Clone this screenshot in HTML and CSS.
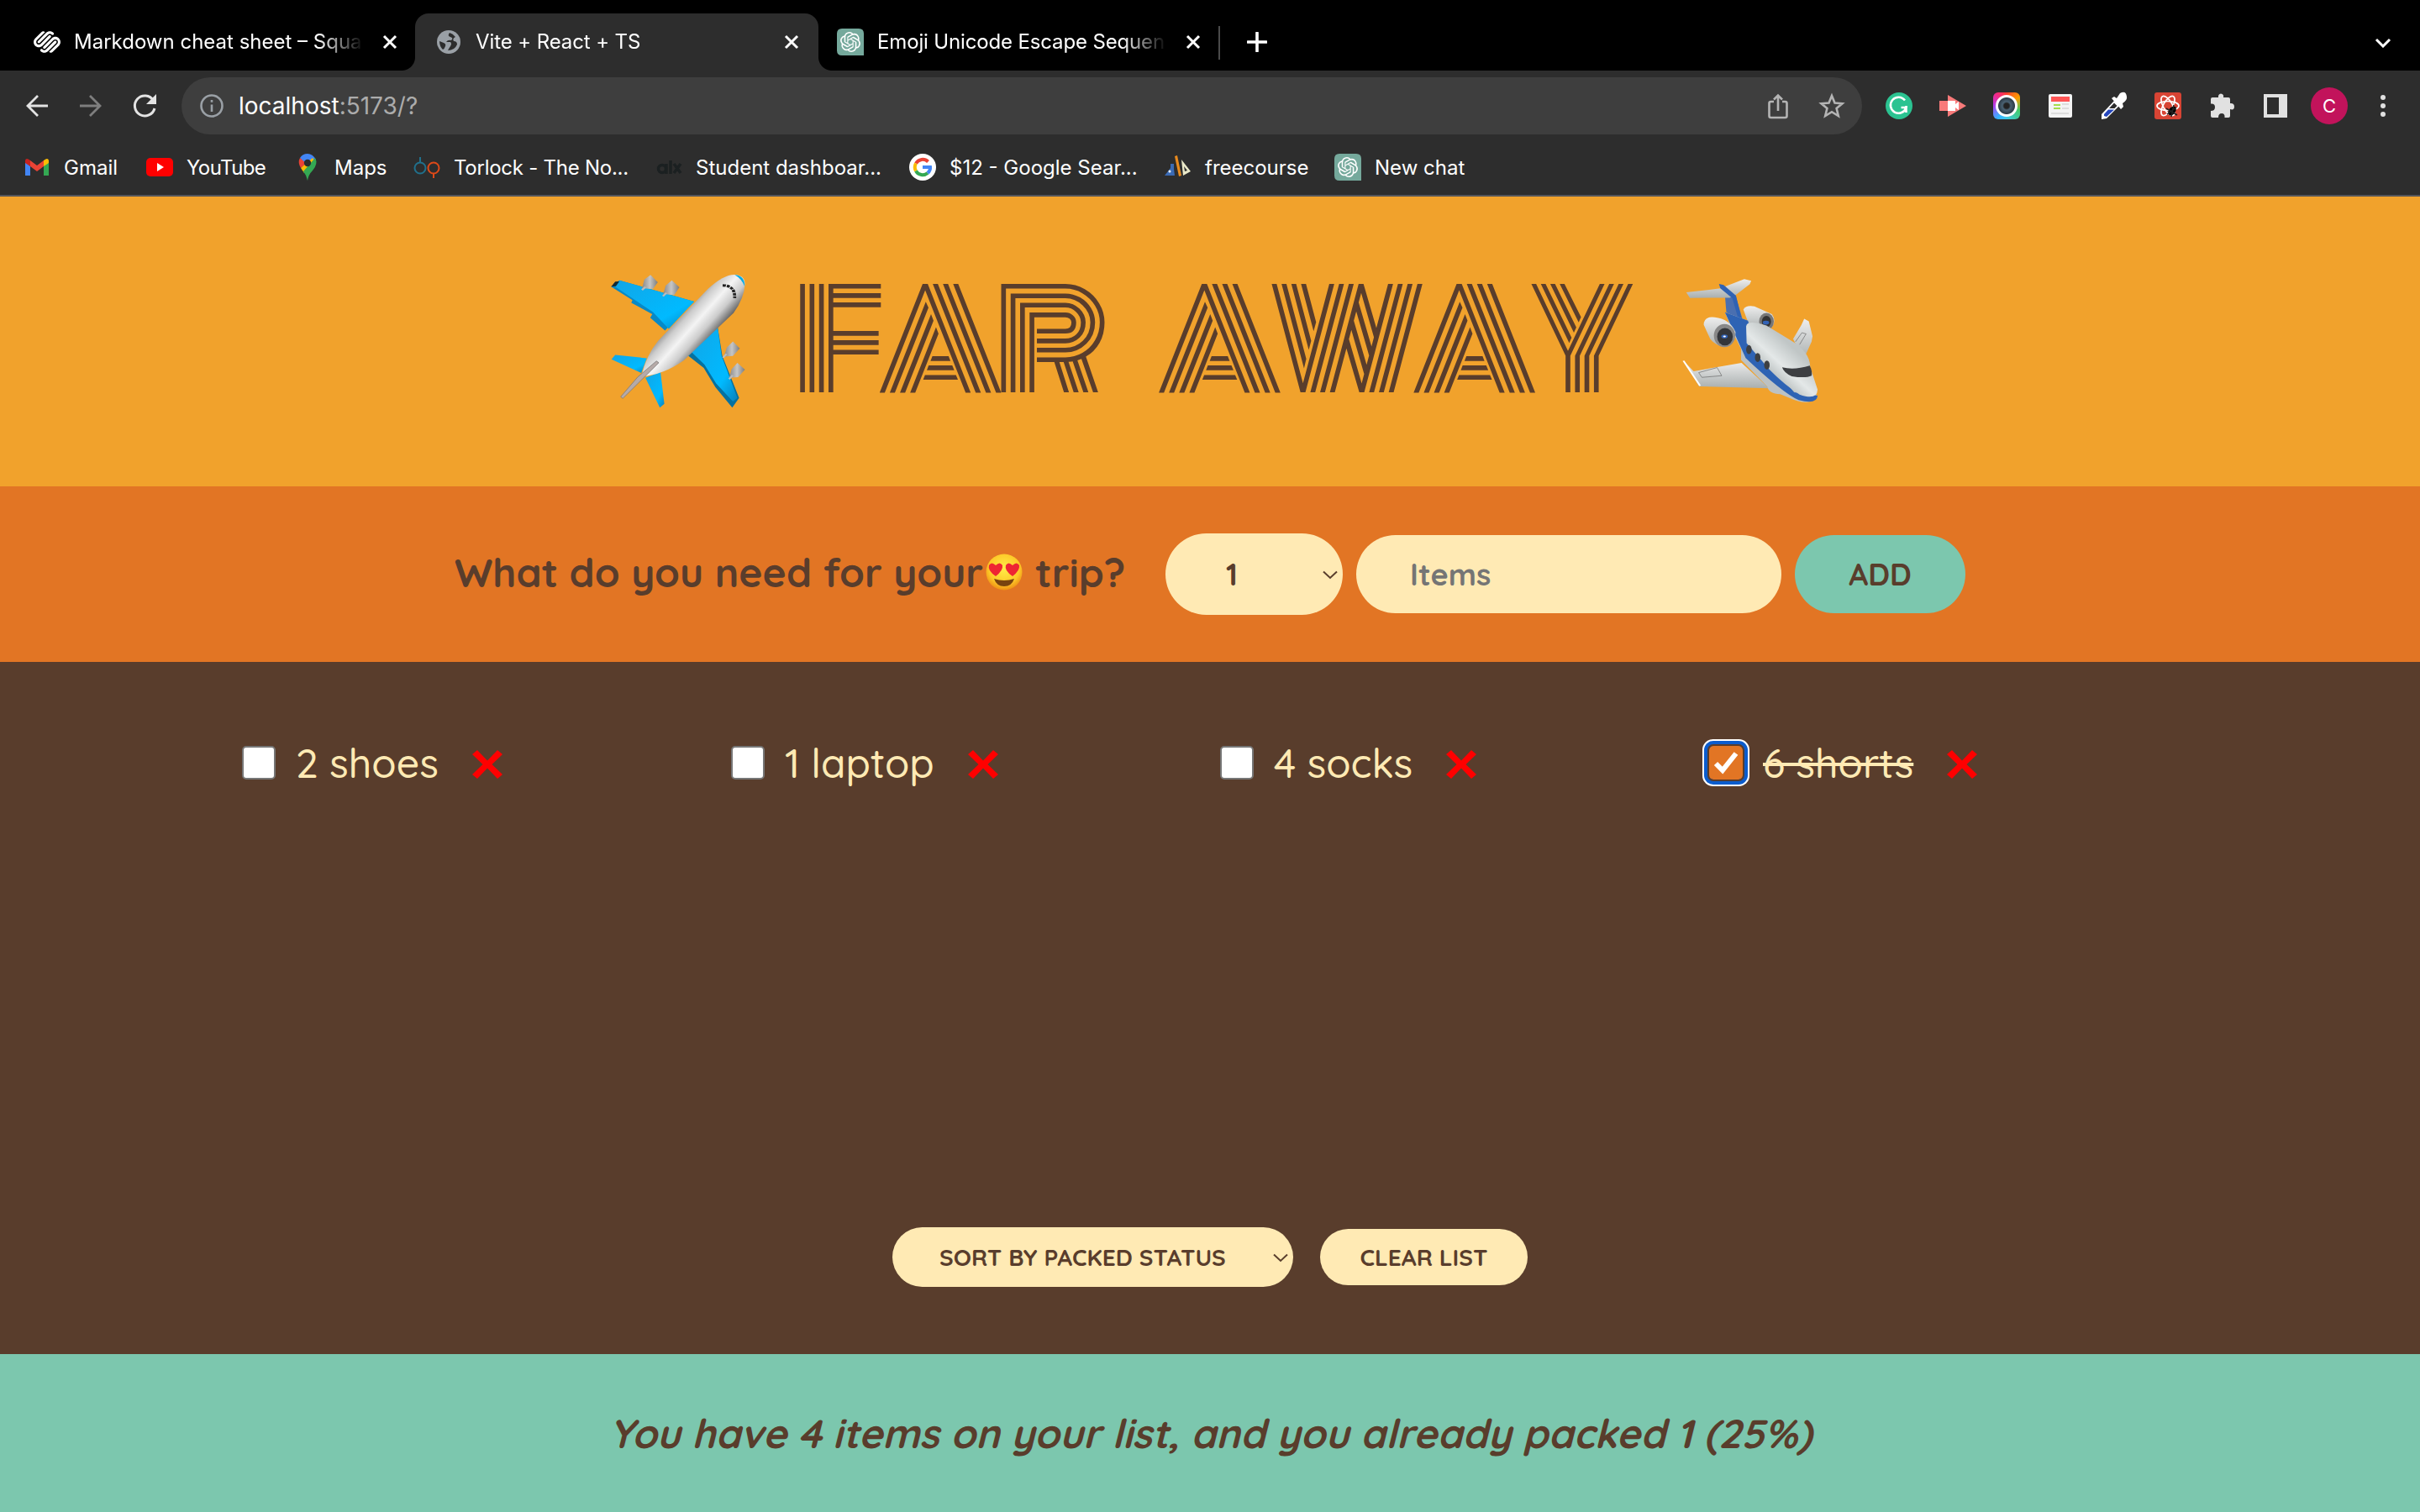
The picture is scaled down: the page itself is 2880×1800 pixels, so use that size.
FILE: index.html
```html
<!DOCTYPE html>
<html lang="en">
<head>
<meta charset="utf-8">
<title>Vite + React + TS</title>
<link rel="stylesheet" href="styles.css">
</head>
<body>
<svg width="0" height="0" class="sprite" aria-hidden="true">
  <symbol id="close" viewBox="0 0 20 20"><path d="M3 3L17 17M17 3L3 17" stroke="#fff" stroke-width="3"/></symbol>
  <symbol id="chat" viewBox="0 0 32 32">
    <path d="M6 0H26Q32 0 32 6V32H6Q0 32 0 26V6Q0 0 6 0Z" fill="#75a99c"/>
    <path transform="translate(4 4)" fill="#fff" d="M22.2819 9.8211a5.9847 5.9847 0 0 0-.5157-4.9108 6.0462 6.0462 0 0 0-6.5098-2.9A6.0651 6.0651 0 0 0 4.9807 4.1818a5.9847 5.9847 0 0 0-3.9977 2.9 6.0462 6.0462 0 0 0 .7427 7.0966 5.98 5.98 0 0 0 .511 4.9107 6.051 6.051 0 0 0 6.5146 2.9001A5.9847 5.9847 0 0 0 13.2599 24a6.0557 6.0557 0 0 0 5.7718-4.2058 5.9894 5.9894 0 0 0 3.9977-2.9001 6.0557 6.0557 0 0 0-.7475-7.0729zm-9.022 12.6081a4.4755 4.4755 0 0 1-2.8764-1.0408l.1419-.0804 4.7783-2.7582a.7948.7948 0 0 0 .3927-.6813v-6.7369l2.02 1.1686a.071.071 0 0 1 .038.052v5.5826a4.504 4.504 0 0 1-4.4945 4.4944zm-9.6607-4.1254a4.4708 4.4708 0 0 1-.5346-3.0137l.142.0852 4.783 2.7582a.7712.7712 0 0 0 .7806 0l5.8428-3.3685v2.3324a.0804.0804 0 0 1-.0332.0615L9.74 19.9502a4.4992 4.4992 0 0 1-6.1408-1.6464zM2.3408 7.8956a4.485 4.485 0 0 1 2.3655-1.9728V11.6a.7664.7664 0 0 0 .3879.6765l5.8144 3.3543-2.0201 1.1685a.0757.0757 0 0 1-.071 0l-4.8303-2.7865A4.504 4.504 0 0 1 2.3408 7.872zm16.5963 3.8558L13.1038 8.364 15.1192 7.2a.0757.0757 0 0 1 .071 0l4.8303 2.7913a4.4944 4.4944 0 0 1-.6765 8.1042v-5.6772a.79.79 0 0 0-.407-.667zm2.0107-3.0231l-.142-.0852-4.7735-2.7818a.7759.7759 0 0 0-.7854 0L9.409 9.2297V6.8974a.0662.0662 0 0 1 .0284-.0615l4.8303-2.7866a4.4992 4.4992 0 0 1 6.6802 4.66zM8.3065 12.863l-2.02-1.1638a.0804.0804 0 0 1-.038-.0567V6.0742a4.4992 4.4992 0 0 1 7.3757-3.4537l-.142.0805L8.704 5.459a.7948.7948 0 0 0-.3927.6813zm1.0976-2.3654l2.602-1.4998 2.6069 1.4998v2.9994l-2.5974 1.4997-2.6067-1.4997Z"/>
  </symbol>
  <symbol id="cross" viewBox="0 0 36 34"><path d="M6 0L18 12.500L30 0L36 5L23.500 17L36 29L30 34L18 21.500L6 34L0 29L12.500 17L0 5Z" fill="#f00"/></symbol>
  <symbol id="caret" viewBox="0 0 18 11"><path d="M1 1.500L9 9L17 1.500" fill="none" stroke="#593d2c" stroke-width="2"/></symbol>
</svg>

<div class="tabs">
  <div class="tab">
    <svg class="ico" viewBox="0 0 24 24" fill="#fff"><path d="M22.655 8.719c-1.802-1.801-4.726-1.801-6.564 0l-7.351 7.35c-.45.45-.45 1.2 0 1.65.45.449 1.2.449 1.65 0l7.351-7.351c.899-.899 2.362-.899 3.264 0 .9.9.9 2.364 0 3.264l-7.239 7.239c.9.899 2.362.899 3.263 0l5.589-5.589c1.836-1.838 1.836-4.763.037-6.563zm-2.475 2.437c-.451-.45-1.201-.45-1.65 0l-7.354 7.389c-.9.899-2.361.899-3.262 0-.45-.45-1.2-.45-1.65 0s-.45 1.2 0 1.649c1.801 1.801 4.726 1.801 6.564 0l7.351-7.35c.449-.487.449-1.239.001-1.688zm-2.439-7.35c-1.801-1.801-4.726-1.801-6.564 0l-7.351 7.351c-.45.449-.45 1.199 0 1.649s1.2.45 1.65 0l7.395-7.351c.9-.899 2.371-.899 3.27 0 .451.45 1.201.45 1.65 0 .421-.487.421-1.199-.05-1.649zm-2.475 2.475c-.45-.449-1.2-.449-1.65 0l-7.351 7.351c-.899.9-2.362.9-3.265 0-.9-.9-.9-2.364 0-3.264l7.239-7.239c-.9-.9-2.362-.9-3.263 0L1.35 8.719c-1.8 1.8-1.8 4.762 0 6.563 1.801 1.801 4.725 1.801 6.564 0l7.35-7.351c.451-.488.451-1.238 0-1.65z"/></svg>
    <span class="label">Markdown cheat sheet – Squa</span>
    <svg class="x"><use href="#close"/></svg>
  </div>
  <div class="tab active">
    <svg class="ico" viewBox="0 0 32 32"><circle cx="16" cy="16" r="14" fill="#9aa0a6"/><path d="M17 5Q14 9 18 10T19 14Q15 13 13 16H18Q20 18 18 21T15 26Q23 26 26 19Q26 15 22 15Q20 12 24 10Q21 6 17 5ZM5 15L10 17Q13 18 12 21T9 25Q5 21 5 15Z" fill="#2d2d2d"/></svg>
    <span class="label">Vite + React + TS</span>
    <svg class="x"><use href="#close"/></svg>
  </div>
  <div class="tab">
    <svg class="ico"><use href="#chat"/></svg>
    <span class="label emoji-tab">Emoji Unicode Escape Sequen</span>
    <svg class="x"><use href="#close"/></svg>
  </div>
  <i class="divider"></i>
  <svg class="plus" viewBox="0 0 24 24"><path d="M12 1V23M1 12H23" stroke="#fff" stroke-width="3.600" stroke-linecap="round"/></svg>
  <svg class="menu-caret" viewBox="0 0 20 12"><path d="M2 2L10 10L18 2" fill="none" stroke="#fff" stroke-width="3"/></svg>
</div>

<div class="toolbar">
  <div class="nav">
    <svg viewBox="0 0 32 32" fill="none" stroke="#e3e3e3" stroke-width="2.800"><path d="M29 16H5M17 4L5 16L17 28"/></svg>
    <svg viewBox="0 0 32 32" fill="none" stroke="#7e7e7e" stroke-width="2.800"><path d="M3 16H27M15 4L27 16L15 28"/></svg>
    <svg viewBox="0 0 32 32" fill="none" stroke="#e3e3e3" stroke-width="3"><path d="M26.500 9.500A12 12 0 1 0 28 19"/><path d="M30 2V14H18Z" fill="#e3e3e3" stroke="none"/></svg>
  </div>
  <div class="omnibox">
    <svg class="info" viewBox="0 0 28 28" fill="none" stroke="#9aa0a6" stroke-width="2.600"><circle cx="14" cy="14" r="12.500"/><path d="M14 12.500V21M14 7V9.800"/></svg>
    <span class="url">localhost<span>:5173/?</span></span>
    <svg viewBox="0 0 64 64" fill="none" stroke="#b4b4b4" stroke-width="2.600"><path d="M27 27H23.500Q21.500 27 21.500 29V44Q21.500 46 23.500 46H40.500Q42.500 46 42.500 44V29Q42.500 27 40.500 27H37M32 38V20M27 24.500L32 19.500L37 24.500"/></svg>
    <svg viewBox="0 0 64 64" fill="none" stroke="#b4b4b4" stroke-width="2.600"><path d="M32 20L35.500 28.500L44.500 29.200L37.600 35L39.800 44L32 39.200L24.200 44L26.400 35L19.500 29.200L28.500 28.500Z"/></svg>
  </div>
  <div class="exts">
    <svg viewBox="0 0 64 64"><circle cx="32" cy="32" r="16" fill="#2bc391"/><path d="M39 25.500A9.500 9.500 0 1 0 40.500 34H34.500M40.500 32V40" fill="none" stroke="#fff" stroke-width="2.600"/></svg>
    <svg viewBox="0 0 64 64"><path d="M16 26H26V19L48 32L26 45V38H16Z" fill="#f87a7a"/><path d="M26 26H35V30L39 27V37L35 34V38H26Z" fill="#fff"/></svg>
    <div class="camera"><i></i></div>
    <svg viewBox="0 0 64 64"><rect x="18" y="18" width="28" height="28" rx="2" fill="#f4f4f4"/><rect x="21" y="21" width="22" height="6" fill="#f55"/><path d="M24 30H32V32H24ZM24 34H32V36H24Z" fill="#a5dc4c"/><path d="M34 30H42M34 35H42M21 41H42" stroke="#ddd" stroke-width="2"/></svg>
    <svg viewBox="0 0 64 64"><path d="M17 48V42L32 26L38 32L23 47Z" fill="#fff"/><path d="M20 44V42L25 36.500H32L23 45Z" fill="#2446bd"/><path d="M26 35L32 28.500L35.500 32L32.500 35Z" fill="#2d2d2d"/><path d="M29 23L32 21L35 23L39 17Q46 13 47 21Q48 25 42 29L43 33L40 36Z" fill="#fff"/></svg>
    <svg viewBox="0 0 64 64"><rect x="16" y="16" width="32" height="32" rx="3" fill="#d84434"/><g fill="none" stroke="#fff" stroke-width="1.700"><ellipse cx="32" cy="32" rx="13" ry="5.500"/><ellipse cx="32" cy="32" rx="13" ry="5.500" transform="rotate(60 32 32)"/><ellipse cx="32" cy="32" rx="13" ry="5.500" transform="rotate(120 32 32)"/></g><ellipse cx="37" cy="38" rx="4" ry="6" transform="rotate(35 37 38)"/><path d="M30 35L43 43M31 42L42 34M36 45L39 31" stroke="#222" stroke-width="1.500"/></svg>
    <svg viewBox="0 0 64 64"><path d="M28 22Q27.500 18 31 17.500Q35 18 34 22H40Q42 22 42 24V29Q47 28.500 47 33T42 36V44Q42 46 40 46H35.500Q36 41 32 41T28 46H21Q19 46 19 44V38Q24 38 24 33.500T19 29.500V24Q19 22 21 22Z" fill="#e1e1e1"/></svg>
    <svg viewBox="0 0 64 64"><path d="M18 18H46V46H18ZM22 22V42H36V22Z" fill="#e1e1e1" fill-rule="evenodd"/></svg>
    <div class="avatar"><b>C</b></div>
    <svg viewBox="0 0 64 64" fill="#e1e1e1"><circle cx="32" cy="22" r="3"/><circle cx="32" cy="32" r="3"/><circle cx="32" cy="42" r="3"/></svg>
  </div>
</div>

<div class="bookmarks">
  <a><svg viewBox="0 0 32 32"><path d="M2 8V26H8V15Z" fill="#4285f4"/><path d="M30 8V26H24V15Z" fill="#34a853"/><path d="M8 8L16 14L24 8V15L16 21L8 15Z" fill="#ea4335"/><path d="M2 8Q3 4 8 8V15L2 11Z" fill="#c5221f"/><path d="M30 8Q29 4 24 8V15L30 11Z" fill="#fbbc04"/></svg><span>Gmail</span></a>
  <a><svg viewBox="0 0 32 32"><rect y="5" width="32" height="22" rx="5" fill="#f00"/><path d="M13 11V21L21 16Z" fill="#fff"/></svg><span class="tighter">YouTube</span></a>
  <a><svg viewBox="0 0 32 32"><path d="M7 5Q10 0 16 0T26 7L20 16L13 13Z" fill="#4285f4"/><path d="M8 17Q4 10 7 5L15 12Z" fill="#ea4335"/><path d="M8 17L22 5L24 8L12 23Z" fill="#fbbc04"/><path d="M25 5Q29 12 22 20Q17 25 16 32Q15 26 11 21Z" fill="#34a853"/><circle cx="16" cy="11" r="4.200" fill="#2d2d2d"/></svg><span>Maps</span></a>
  <a><svg viewBox="0 0 32 32" fill="none" stroke-width="2"><circle cx="8" cy="17" r="6.500" stroke="#20708c"/><path d="M8 10V4" stroke="#20708c"/><circle cx="24" cy="17" r="6.500" stroke="#dd4918"/><path d="M24 23V29" stroke="#dd4918"/></svg><span class="tight">Torlock - The No...</span></a>
  <a><svg viewBox="0 0 32 32" fill="none" stroke="#1b2021" stroke-width="3.500"><circle cx="8" cy="18" r="4.500"/><path d="M13 12V24M18 8V24M22 12L30 23M30 12L22 23"/></svg><span>Student dashboar...</span></a>
  <a><svg viewBox="0 0 32 32" fill="none" stroke-width="4"><circle cx="16" cy="16" r="16" fill="#fff"/><path d="M22.500 9.500A9.200 9.200 0 0 0 8 11.500" stroke="#ea4335"/><path d="M8 11.500A9.200 9.200 0 0 0 8 20.500" stroke="#fbbc04"/><path d="M8 20.500A9.200 9.200 0 0 0 22 23" stroke="#34a853"/><path d="M22 23Q25.500 20 25 16H16" stroke="#4285f4"/></svg><span>$12 - Google Sear...</span></a>
  <a><svg viewBox="0 0 32 32"><path d="M7 12H11V18L12 26H0L7 17Z" fill="#3b6bb5"/><path d="M12 3L15 2L20 26L17 27Z" fill="#e98b1e"/><path d="M20 7L31 21L22 26ZM23 15L24 21L27 20Z" fill="#e9e8c8" fill-rule="evenodd"/><circle cx="6" cy="21" r="1.500" fill="#fff"/></svg><span>freecourse</span></a>
  <a><svg><use href="#chat"/></svg><span>New chat</span></a>
</div>

<header class="hero">
  <svg class="plane" viewBox="60 75 404 490" preserveAspectRatio="none">
    <defs>
      <linearGradient id="body" gradientUnits="userSpaceOnUse" x1="255" y1="220" x2="365" y2="300"><stop offset="0" stop-color="#777"/><stop offset=".25" stop-color="#ccc"/><stop offset=".5" stop-color="#f4f4f4"/><stop offset=".75" stop-color="#ccc"/><stop offset="1" stop-color="#666"/></linearGradient>
      <linearGradient id="wing" x1="0" y1="0" x2="1" y2="1"><stop offset="0" stop-color="#12a5e6"/><stop offset=".7" stop-color="#00baff"/><stop offset="1" stop-color="#0a80ba"/></linearGradient>
      <linearGradient id="pod" x1="0" x2="1"><stop offset="0" stop-color="#888"/><stop offset=".5" stop-color="#c6c6c6"/><stop offset="1" stop-color="#7c7c7c"/></linearGradient>
    </defs>
    <path d="M92 101L310 177L225 281L182 235L188 222L127 182L130 172L68 124Z" fill="#0789c6"/>
    <path d="M92 101L310 177L236 275L190 215L75 120Z" fill="url(#wing)"/>
    <path d="M68 124L80 106L92 105L82 122Z" fill="#122b38"/>
    <path d="M378 265L392 372L441 522L421 557L372 484L338 415L292 370Z" fill="#06719f"/>
    <path d="M378 265L390 372L436 522L423 535L374 470L340 403L300 355Z" fill="url(#wing)"/>
    <path d="M80 368L172 380L156 433L69 384Z" fill="url(#wing)"/>
    <path d="M168 450L212 430L223 543L210 557Z" fill="url(#wing)"/>
    <g fill="url(#pod)"><path d="M183 82L204 108L190 132L158 130L165 98Z"/><path d="M245 101L267 126L252 154L220 150L227 120Z"/><path d="M423 320L443 345L423 372L397 374L405 342Z"/><path d="M436 397L458 421L438 448L412 450L419 419Z"/></g>
    <path d="M158 136L168 125M219 158L229 146M394 378L404 365M412 455L422 441" stroke="#bbb" stroke-width="6"/>
    <path d="M430 81Q458 85 458 115Q456 165 425 218L280 388Q220 440 156 446Q170 370 205 318L350 132Q398 78 430 81Z" fill="url(#body)"/>
    <path d="M428 82Q458 84 457 123Q448 95 428 82Z" fill="#08ace4"/>
    <path d="M393 119Q430 120 428 165" fill="none" stroke="#222" stroke-width="9" stroke-dasharray="9 3"/>
    <path d="M200 390L207 396L102 524L96 518L145 448Z" fill="#b6aaa8" stroke="#777" stroke-width="2"/>
  </svg>
  <h1>FAR AWAY</h1>
  <svg class="jet" viewBox="1200 90 310 455" preserveAspectRatio="none">
    <defs>
      <linearGradient id="hull" gradientUnits="userSpaceOnUse" x1="1350" y1="390" x2="1440" y2="330"><stop offset="0" stop-color="#a9b0b0"/><stop offset=".5" stop-color="#e4e8e8"/><stop offset="1" stop-color="#c0c6c6"/></linearGradient>
      <linearGradient id="fin" x1="0" y1="0" x2="0" y2="1"><stop offset="0" stop-color="#eee"/><stop offset="1" stop-color="#a9afaf"/></linearGradient>
    </defs>
    <path d="M1300 155L1322 150L1340 250L1303 215Z" fill="#4a6fb0"/>
    <path d="M1216 144L1290 130L1342 97L1357 103L1354 115L1322 155L1310 163L1224 164Z" fill="url(#fin)"/>
    <path d="M1287 114L1297 118L1324 156L1337 245L1329 238L1316 165L1290 130Z" fill="#2f62b4"/>
    <path d="M1340 205Q1346 188 1364 194L1402 222Q1412 245 1402 268L1389 280L1350 250Z" fill="url(#fin)"/>
    <ellipse cx="1390" cy="248" rx="16" ry="31" fill="#777"/><ellipse cx="1390" cy="248" rx="10" ry="20" fill="#333"/><circle cx="1389" cy="252" r="7" fill="#3263b7"/>
    <path d="M1448 310L1466 260L1472 238L1482 247L1490 300L1488 320L1470 385Z" fill="url(#fin)"/>
    <path d="M1453 320L1467 288L1476 292L1462 330" fill="none" stroke="#666" stroke-width="1.500"/>
    <path d="M1210 388L1232 425L1336 395L1396 486L1244 479Z" fill="url(#fin)"/>
    <path d="M1210 388L1246 477" stroke="#fff" stroke-width="4"/>
    <path d="M1243 430L1283 412L1293 441L1250 447Z" fill="none" stroke="#666" stroke-width="1.500"/>
    <path d="M1300 215L1350 245L1495 485L1500 520Q1480 550 1440 520L1420 507Q1395 505 1392 480L1335 385L1335 345L1318 290Z" fill="#bcc2c4"/>
    <path d="M1300 215L1350 245L1362 320L1450 500L1501 512Q1500 545 1460 528Q1425 502 1345 378Z" fill="#2e63b4"/>
    <path d="M1346 265Q1348 240 1390 262L1440 312Q1485 355 1485 410L1501 490Q1500 530 1462 508Q1430 475 1397 420L1347 325Z" fill="url(#hull)"/>
    <g fill="#3d3f42"><ellipse cx="1352" cy="348" rx="6" ry="16"/><ellipse cx="1371" cy="376" rx="6" ry="16"/><ellipse cx="1391" cy="403" rx="6" ry="16"/><path d="M1424 411Q1450 422 1484 405Q1490 425 1488 441Q1475 451 1445 443Q1428 431 1424 411Z"/></g>
    <path d="M1254 260Q1254 228 1278 233Q1310 238 1323 285Q1323 330 1300 339Q1280 335 1268 310Z" fill="url(#fin)"/>
    <ellipse cx="1299" cy="298" rx="23" ry="41" fill="#888"/><ellipse cx="1300" cy="302" rx="17" ry="31" fill="#34363a"/><circle cx="1299" cy="301" r="7" fill="#3263b7"/><circle cx="1299" cy="301" r="3" fill="#fff"/>
  </svg>
</header>

<form class="add-form">
  <h3><span class="q1">What do you need for your</span><svg class="love" viewBox="0 0 44 44"><defs><radialGradient id="face" cx=".5" cy=".4" r=".6"><stop offset="0" stop-color="#ffec48"/><stop offset=".7" stop-color="#fdc928"/><stop offset="1" stop-color="#ef9015"/></radialGradient></defs><circle cx="22" cy="22" r="21.500" fill="url(#face)"/><g fill="#ee2533"><path id="heart" d="M12 27Q2 20 4 14Q7 9 12 14Q17 9 20 14Q21 20 12 27Z"/><use href="#heart" x="20"/></g><path d="M10 30Q22 34 34 30Q31 39 22 39T10 30Z" fill="#78430f"/></svg><span class="q2">trip?</span></h3>
  <div class="picker"><select class="pill qty"><option>1</option></select><svg class="caret"><use href="#caret"/></svg></div>
  <input class="pill item-name" placeholder="Items">
  <button class="pill add" type="button">ADD</button>
</form>

<main class="list">
  <ul>
    <li><i class="box"></i><span class="w1">2 shoes</span><svg><use href="#cross"/></svg></li>
    <li><i class="box"></i><span class="w2">1 laptop</span><svg><use href="#cross"/></svg></li>
    <li><i class="box"></i><span class="w3">4 socks</span><svg><use href="#cross"/></svg></li>
    <li><i class="box checked"><svg viewBox="0 0 40 40"><path d="M8 21L16 29L32 9" fill="none" stroke="#fff" stroke-width="6"/></svg></i><span class="w4"><s>6 shorts</s></span><svg><use href="#cross"/></svg></li>
  </ul>
  <div class="actions">
    <div class="picker"><select class="pill sort"><option>SORT BY PACKED STATUS</option></select><svg class="caret"><use href="#caret"/></svg></div>
    <button class="pill clear" type="button">CLEAR LIST</button>
  </div>
</main>

<footer class="stats"><em>You have 4 items on your list, and you already packed 1 (25%)</em></footer>
</body>
</html>
```
FILE: styles.css
```css
* { box-sizing: border-box; }
body {
  margin: 0; width: 2880px; height: 1800px; overflow: hidden;
  display: grid; grid-template-rows: 84px 76px 74px 345px 209px 824px 188px;
  font-family: Inter, sans-serif; color: #fff; background: #593d2c;
}
.sprite { position: absolute; }
svg { display: block; flex: none; }

/* browser chrome */
.tabs { display: flex; background: #000; padding-top: 16px; height: 84px; }
.tab { width: 480px; height: 68px; display: flex; align-items: center; padding: 0 20px 0 26px; font-size: 24px; position: relative; }
.tab:first-child { width: 494px; padding-left: 40px; }
.tab:nth-child(3) { padding-left: 22px; padding-right: 24px; }
.tab .ico { width: 32px; height: 32px; }
.tab .label { margin: 0 24px 0 16px; flex: 1; overflow: hidden; white-space: nowrap; line-height: 40px;
  -webkit-mask-image: linear-gradient(90deg, #000 290px, transparent 345px); mask-image: linear-gradient(90deg, #000 290px, transparent 345px); }
.tab.active .label { letter-spacing: -.1px; }
.emoji-tab { letter-spacing: -.15px; }
.tight { letter-spacing: -.25px; }
.tighter { letter-spacing: -.6px; }
.tab .x { width: 20px; height: 20px; }
.tab.active { background: #2d2d2d; border-radius: 16px 16px 0 0; padding-left: 24px; padding-right: 22px; }
.tab.active::before, .tab.active::after { content: ""; position: absolute; bottom: 0; width: 16px; height: 16px; }
.tab.active::before { left: -16px; background: radial-gradient(circle at 0 0, #000 15.500px, #2d2d2d 16.500px); }
.tab.active::after { right: -16px; background: radial-gradient(circle at 100% 0, #000 15.500px, #2d2d2d 16.500px); }
.divider { width: 2px; height: 40px; background: #4a4a4a; margin: 15px 32px 0 -4px; }
.plus { width: 24px; height: 24px; margin: 22px 0 0 0; }
.menu-caret { width: 20px; height: 12px; margin: 29px 34px 0 auto; }

.toolbar { background: #2d2d2d; display: flex; align-items: flex-end; }
.nav { display: flex; gap: 32px; padding: 0 28px; height: 68px; align-items: center; }
.nav svg { width: 32px; height: 32px; }
.omnibox { width: 2000px; height: 68px; border-radius: 34px; background: #3e3e3e; display: flex; align-items: center; padding: 0 4px 0 22px; }
.omnibox svg { width: 64px; height: 64px; }
.omnibox .info { width: 28px; height: 28px; }
.url { flex: 1; font-size: 28px; margin-left: 18px; }
.url span { color: #acacac; }
.exts { display: flex; margin-left: 12px; height: 68px; align-items: center; }
.exts > * { width: 64px; height: 64px; }
.camera, .avatar { display: grid; place-items: center; }
.camera { background: conic-gradient(#ff3b30, #ff9d00 15%, #4c6 30%, #3cc8e8 50%, #35b2ff 60%, #b040f0 75%, #f0298a 88%, #ff3b30) center / 32px 32px no-repeat; clip-path: inset(16px round 6px); }
.camera i { width: 26px; height: 26px; border-radius: 50%; background: radial-gradient(circle, #222 3px, #4a6273 5px, #2d3c48 9.500px, #fff 10.500px); }
.avatar b { width: 44px; height: 44px; border-radius: 50%; background: #c2135b; font: 22px/44px Inter, sans-serif; text-align: center; }

.bookmarks { background: #2d2d2d; border-bottom: 2px solid #55555a; padding: 6px 0 0 28px;
  display: grid; grid-template-columns: 146px 176px 142px 288px 302px 304px 202px 200px; align-items: center; font-size: 24px; }
.bookmarks a { display: flex; align-items: center; gap: 16px; white-space: nowrap; }
.bookmarks svg { width: 32px; height: 32px; }

/* application */
.hero, .add-form, .list, .stats { font-family: Quicksand, Lato, sans-serif; }
.hero { background: #f1a22c; display: flex; padding: 91px 0 0 724px; }
.plane { width: 165px; height: 163px; }
.hero h1 { margin: 17px 0 0; padding-left: 56px; width: 1109px; height: 130px; color: #593d2c; white-space: nowrap;
  font: 400 160px/130px Monoton, Lato, sans-serif; letter-spacing: -10px; word-spacing: 60px; }
.jet { width: 170px; height: 152px; margin: 5px 0 0; }

.add-form { background: #e27524; color: #593d2c; display: flex; align-items: center; padding-left: 541px; }
.add-form h3 { margin: 0; padding-bottom: 5px; width: 846px; font-size: 48px; display: flex; align-items: center; white-space: nowrap; }
.love { width: 44px; height: 44px; }
.q1 { width: 632px; }
.q2 { margin-left: 15px; }
.picker { position: relative; display: flex; }
.caret { position: absolute; right: 6px; top: calc(50% - 5px); width: 18px; height: 11px; }
.pill { appearance: none; border: 0; border-radius: 50px; background: #ffeab4; color: #593d2c; font: bold 36px Quicksand, Lato, sans-serif; margin: 0; }
.qty { width: 211px; height: 97px; padding: 0 72px; }
.item-name { width: 506px; height: 93px; margin: 0 16px; padding: 0 64px; }
.item-name::placeholder { color: #757575; }
.add { width: 203px; height: 93px; background: #7cc7ae; }

.list { color: #ffeab4; display: flex; flex-direction: column; justify-content: space-between; padding: 76px 0 80px; }
.list ul { list-style: none; margin: 0; padding: 0 0 0 288px; display: grid; grid-template-columns: repeat(4, 582px); }
.list li { display: flex; align-items: center; font-size: 48px; font-weight: 500; height: 88px; }
.list li > svg { width: 36px; height: 34px; margin-top: 4px; }
.list li span { margin-left: 24px; white-space: nowrap; }
.w1 { width: 210px; } .w2 { width: 218px; } .w3 { width: 205px; } .w4 { width: 219px; }
.box { width: 40px; height: 40px; border: 2px solid #767676; border-radius: 5px; background: #fff; }
.box.checked { border: 0; background: #e27524; outline: 2px solid #593d2c; box-shadow: 0 0 0 6px #0b5ccd, 0 0 0 8px #fff; }
.actions { display: flex; align-items: center; padding-left: 1062px; gap: 32px; height: 71px; }
.sort { width: 477px; height: 71px; padding: 0 56px; font-size: 28px; }
.clear { width: 247px; height: 67px; font-size: 28px; }

.stats { background: #7cc7ae; color: #593d2c; display: flex; align-items: center; padding-left: 725px; font-size: 48px; font-weight: bold; }
.stats em { white-space: nowrap; }
```
